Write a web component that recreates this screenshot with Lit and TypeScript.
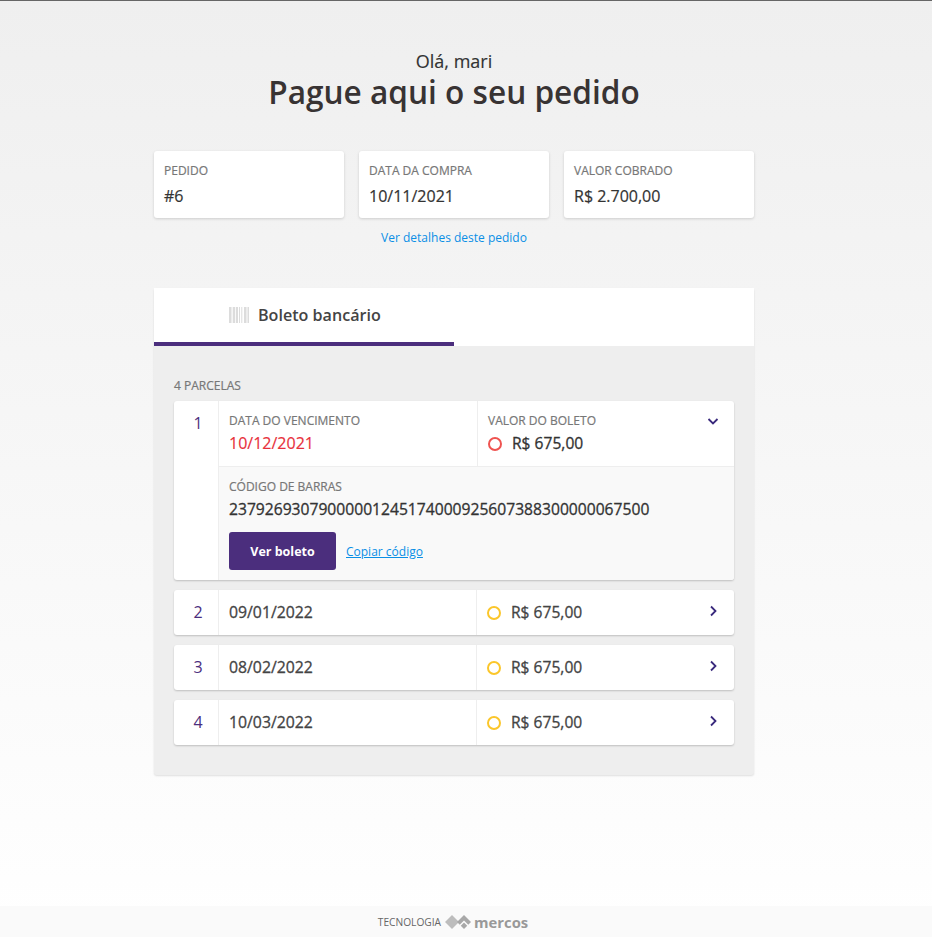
import { LitElement, html, css, svg } from "lit";
import { customElement } from "lit/decorators.js";

const rows = [
  { n: 2, date: "09/01/2022" },
  { n: 3, date: "08/02/2022" },
  { n: 4, date: "10/03/2022" },
];

@customElement("app-root")
export class AppRoot extends LitElement {
  static styles = css`
    :host {
      display: flex;
      flex-direction: column;
      height: 937px;
      font-family: "Open Sans", sans-serif;
      color: #333;
      background: linear-gradient(#efefef, #ffffff);
      border-top: 1px solid #666;
      box-sizing: border-box;
      overflow: hidden;
    }
    main { flex: 1; width: 600px; margin-left: 154px; display: flex; flex-direction: column; }
    .hello { text-align: center; font-size: 18px; line-height: 24px; margin-top: 48px; color: #333; -webkit-text-stroke: 0.15px #333; }
    h1 { margin: 0; text-align: center; font-size: 31.6px; line-height: 38px; font-weight: 600; color: #383333; }
    .cards { display: flex; gap: 15px; margin-top: 40px; }
    .card { flex: 1; height: 67px; box-sizing: border-box; padding: 12px 10px; background: #fff; border-radius: 3px; box-shadow: 0 1px 3px rgba(0,0,0,.16); }
    .label { font-size: 12px; line-height: 16px; color: #777; -webkit-text-stroke: 0.2px #777; }
    .card .val { font-size: 16px; line-height: 22px; margin-top: 6px; color: #333; -webkit-text-stroke: 0.2px #333; }
    .details { display: block; text-align: center; font-size: 12px; line-height: 16px; color: #0a8fe6; margin-top: 12px; text-decoration: none; }
    .panel { margin-top: 42px; background: #eee; border-radius: 3px; box-shadow: 0 1px 2px rgba(0,0,0,.12); padding-bottom: 20px; }
    .tabs { background: #fff; height: 58px; }
    .tab { width: 300px; height: 58px; box-sizing: border-box; border-bottom: 4px solid #4b2e7d; display: flex; align-items: center; padding-left: 75px; gap: 9px; padding-bottom: 1px; font-size: 16.1px; font-weight: 600; color: #444; }
    .body { padding: 32px 20px 0; }
    .count { font-size: 12px; line-height: 16px; color: #777; margin-bottom: 7px; -webkit-text-stroke: 0.2px #777; }
    .inst { display: flex; background: #fff; border-radius: 3px; box-shadow: 0 1px 2px rgba(0,0,0,.2); margin-bottom: 10px; overflow: hidden; }
    .num { width: 40px; padding-left: 4px; flex: none; border-right: 1px solid #eee; text-align: center; font-size: 16px; line-height: 22px; color: #4b2e7d; padding-top: 11px; }
    .content { flex: 1; min-width: 0; }
    .head { display: flex; height: 65px; border-bottom: 1px solid #eee; }
    .col { box-sizing: border-box; padding: 12px 10px; }
    .due { width: 259px; border-right: 1px solid #eee; }
    .amount { flex: 1; position: relative; }
    .late { font-size: 16px; line-height: 22px; color: #e8303c; margin-top: 3px; -webkit-text-stroke: 0.15px #e8303c; }
    .money { display: flex; align-items: center; gap: 10px; font-size: 15.6px; line-height: 22px; color: #333; margin-top: 3px; -webkit-text-stroke: 0.3px #333; }
    .dot { width: 14px; height: 14px; margin-top: 2px; box-sizing: border-box; border-radius: 50%; border: 2px solid #ef5350; flex: none; }
    .dot.y { border-color: #fbc62a; }
    .chev { position: absolute; right: 15px; }
    .open { background: #f9f9f9; padding: 12px 10px 10px; height: 113px; box-sizing: border-box; }
    .code { font-size: 15.65px; line-height: 22px; color: #333; margin-top: 3px; -webkit-text-stroke: 0.3px #333; }
    .actions { display: flex; align-items: center; gap: 10px; margin-top: 12px; }
    .btn { width: 107px; height: 38px; background: #4b2e7d; border-radius: 3px; color: #fff; font-size: 12.5px; font-weight: 700; display: flex; align-items: center; justify-content: center; }
    .copy { font-size: 12px; color: #0a8fe6; text-decoration: underline; }
    .short { height: 45px; }
    .short .num { padding-top: 0; line-height: 45px; }
    .short .content { display: flex; }
    .short .d { width: 258px; height: 45px; box-sizing: border-box; border-right: 1px solid #eee; padding-left: 10px; line-height: 44px; font-size: 15.8px; color: #444; -webkit-text-stroke: 0.3px #444; }
    .short .m { flex: 1; display: flex; align-items: center; gap: 10px; padding: 0 0 1px 10px; box-sizing: border-box; font-size: 15.6px; color: #444; position: relative; height: 45px; -webkit-text-stroke: 0.3px #444; }
    .short .chev { top: 15px; right: 15px; }
    .head .chev { top: 14px; }
    footer { height: 31px; flex: none; background: #fafafa; display: flex; align-items: center; justify-content: center; gap: 4px; padding-right: 26px; font-size: 10.2px; color: #666; }
    .brand { font-size: 14.8px; font-weight: 700; color: #999; margin-left: -1px; }
    svg { display: block; flex: none; }
  `;

  private barcode() {
    const bars: [number, number][] = [[0, 2.5], [3.7, 2.5], [7, 2], [10, 1], [12.3, 1], [15, 2.5], [18.5, 1.5]];
    return html`<svg width="20" height="16" viewBox="0 0 20 16">${bars.map(
      ([x, w]) => svg`<rect x=${x} y="0" width=${w} height="16" fill="#dcdcdc"></rect>`
    )}</svg>`;
  }

  private chev(down: boolean) {
    return html`<svg class="chev" width="12" height="12" viewBox="0 0 12 12" fill="none" stroke="#3a2a7d" stroke-width="1.8">
      <path d=${down ? "M1.5 4l4.5 4.5L10.500 4" : "M4 1.500l4.500 4.500-4.500 4.500"}></path>
    </svg>`;
  }

  render() {
    return html`
      <main>
        <div class="hello">Olá, mari</div>
        <h1>Pague aqui o seu pedido</h1>
        <div class="cards">
          <div class="card"><div class="label">PEDIDO</div><div class="val">#6</div></div>
          <div class="card"><div class="label">DATA DA COMPRA</div><div class="val">10/11/2021</div></div>
          <div class="card"><div class="label">VALOR COBRADO</div><div class="val">R$ 2.700,00</div></div>
        </div>
        <a class="details">Ver detalhes deste pedido</a>
        <section class="panel">
          <div class="tabs"><div class="tab">${this.barcode()}<span>Boleto bancário</span></div></div>
          <div class="body">
            <div class="count">4 PARCELAS</div>
            <div class="inst">
              <div class="num">1</div>
              <div class="content">
                <div class="head">
                  <div class="col due"><div class="label">DATA DO VENCIMENTO</div><div class="late">10/12/2021</div></div>
                  <div class="col amount">
                    <div class="label">VALOR DO BOLETO</div>
                    <div class="money"><span class="dot"></span>R$ 675,00</div>
                    ${this.chev(true)}
                  </div>
                </div>
                <div class="open">
                  <div class="label">CÓDIGO DE BARRAS</div>
                  <div class="code">23792693079000001245174000925607388300000067500</div>
                  <div class="actions"><div class="btn">Ver boleto</div><a class="copy">Copiar código</a></div>
                </div>
              </div>
            </div>
            ${rows.map(
              (r) => html`<div class="inst short">
                <div class="num">${r.n}</div>
                <div class="content">
                  <div class="d">${r.date}</div>
                  <div class="m"><span class="dot y"></span>R$ 675,00${this.chev(false)}</div>
                </div>
              </div>`
            )}
          </div>
        </section>
      </main>
      <footer>
        <span>TECNOLOGIA</span>
        <svg width="26" height="16" viewBox="0 0 26 16">
          <path d="M0 8l7-7 7 7-7 7z" fill="#bdbdbd"></path>
          <path d="M12 8l7-7 7 7-7 7z" fill="#a8a8a8"></path>
          <path d="M14 12.500l5-5 5 5" fill="none" stroke="#fafafa" stroke-width="1.5"></path>
        </svg>
        <span class="brand">mercos</span>
      </footer>
    `;
  }
}
